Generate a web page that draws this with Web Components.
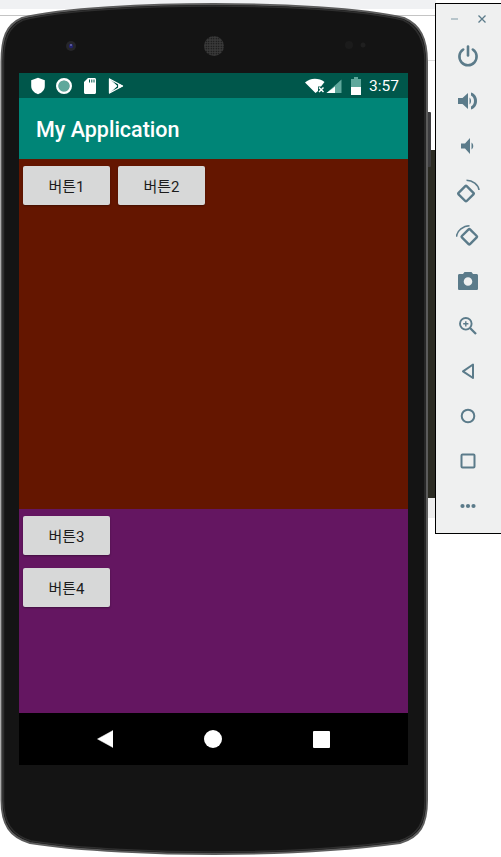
<!DOCTYPE html>
<html lang="ko">
<head>
<meta charset="utf-8">
<title>Emulator</title>
<style>
  html, body { margin: 0; padding: 0; background: #fff; overflow: hidden; }
  body { font-family: Roboto, "Noto Sans CJK KR", sans-serif; }
</style>
</head>
<body>

<emu-desktop>
  <android-phone>
    <status-bar time="3:57"></status-bar>
    <app-bar title="My Application"></app-bar>
    <color-panel color="#641600" grow="350" row>
      <android-button>버튼1</android-button>
      <android-button>버튼2</android-button>
    </color-panel>
    <color-panel color="#641661" grow="204">
      <android-button>버튼3</android-button>
      <android-button>버튼4</android-button>
    </color-panel>
    <nav-bar></nav-bar>
  </android-phone>
  <emu-toolbar></emu-toolbar>
</emu-desktop>

<script>
class EmuDesktop extends HTMLElement {
  constructor() {
    super();
    this.attachShadow({ mode: "open" });
  }

  connectedCallback() {
    this.shadowRoot.innerHTML = `
      <style>
        :host { display: block; position: relative; width: 501px; height: 857px; overflow: hidden; background: #fff; }
        .strip { position: absolute; left: 0; top: 0; width: 436px; height: 9px; background: #f0f1f3; }
        .rule { position: absolute; left: 0; top: 15px; width: 436px; height: 1px; background: #c4c4c4; }
        .rule2 { position: absolute; left: 420px; top: 60px; width: 16px; height: 1px; background: #dcdcdc; }
        .behind { position: absolute; left: 426px; top: 150px; width: 10px; height: 348px; background: #2b2b23; }
        .behind2 { position: absolute; left: 426px; top: 498px; width: 10px; height: 20px; background: #eeeeee; }
      </style>
      <div class="strip"></div>
      <div class="rule"></div>
      <div class="rule2"></div>
      <div class="behind"></div>
      <div class="behind2"></div>
      <slot></slot>
    `;
  }
}

class AndroidPhone extends HTMLElement {
  constructor() {
    super();
    this.attachShadow({ mode: "open" });
  }

  connectedCallback() {
    this.shadowRoot.innerHTML = `
      <style>
        :host { display: block; position: absolute; left: 0; top: 0; width: 432px; height: 857px; }
        svg { position: absolute; left: 0; top: 0; }
        .screen {
          position: absolute;
          left: 19px; top: 73px;
          width: 389px; height: 692px;
          display: flex;
          flex-direction: column;
        }
      </style>
      <svg width="432" height="857" viewBox="0 0 432 857">
        <defs>
          <pattern id="grille" width="2.500" height="2.500" patternUnits="userSpaceOnUse">
            <circle cx="1.250" cy="1.250" r=".7" fill="#0e0e0e"/>
          </pattern>
        </defs>
        <rect x="426" y="112" width="5" height="55" rx="1" fill="#3c3c3e"/>
        <path d="M1.500 62 C1.500 38 6 25 22 18 C62 8 150 4 214 4 C280 4 362 8 404 18 C420 25 427 38 427 62 L427 800 C427 825 420 837 400 843 C340 851 270 854 214 854 C160 854 80 851 30 843 C10 837 1.500 825 1.500 800 Z"
              fill="#141414" stroke="#5c5c5c" stroke-width="2"/>
        <path d="M3.500 62 C3.500 40 8 27 23 20 C62 10 150 6 214 6 C280 6 362 10 403 20 C418 27 425 40 425 62 L425 800 C425 823 418 835 399 841 C340 849 270 852 214 852 C160 852 80 849 31 841 C12 835 3.500 823 3.500 800 Z"
              fill="none" stroke="#2e2e2e" stroke-width="1.500"/>
        <circle cx="71" cy="46" r="5" fill="#26262a"/>
        <circle cx="71" cy="46" r="2.200" fill="#23236e"/>
        <circle cx="71" cy="45" r=".8" fill="#9a9ad0"/>
        <circle cx="214" cy="46" r="10" fill="#3a3a3a"/>
        <circle cx="214" cy="46" r="10" fill="url(#grille)"/>
        <circle cx="349" cy="45" r="4" fill="#1b1b1b"/>
        <circle cx="363" cy="45" r="2.500" fill="#1f1f1f"/>
      </svg>
      <div class="screen"><slot></slot></div>
    `;
  }
}

class StatusBar extends HTMLElement {
  constructor() {
    super();
    this.attachShadow({ mode: "open" });
  }

  connectedCallback() {
    this.shadowRoot.innerHTML = `
      <style>
        :host {
          display: flex;
          align-items: center;
          flex: none;
          height: 25px;
          background: #00574b;
          color: #fff;
          padding: 0 9px 0 11px;
        }
        svg { display: block; flex: none; }
        .left { display: flex; align-items: center; gap: 9px; }
        .right { display: flex; align-items: center; margin-left: auto; }
        .time { font: 400 15.500px Roboto, sans-serif; margin-left: 8px; }
      </style>
      <div class="left">
        <svg width="16" height="18" viewBox="0 0 16 18"><path d="M8 .8 L14.800 3.200 V9 C14.800 13 12 15.800 8 17.200 C4 15.800 1.200 13 1.200 9 V3.200 Z" fill="#fff"/></svg>
        <svg width="18" height="18" viewBox="0 0 18 18"><circle cx="9" cy="9" r="5.500" fill="#5fa89c"/><circle cx="9" cy="9" r="6.800" fill="none" stroke="#fff" stroke-width="2.400"/></svg>
        <svg width="14" height="18" viewBox="0 0 14 18" style="margin-left:1px"><path d="M5 1 H11.500 C12.400 1 13 1.600 13 2.500 V15.500 C13 16.400 12.400 17 11.500 17 H2.500 C1.600 17 1 16.400 1 15.500 V5 Z" fill="#fff"/><path d="M6.500 2.500v3M8.800 2.500v3M11 2.500v3" stroke="#00574b" stroke-width="1"/></svg>
        <svg width="16" height="18" viewBox="0 0 16 18" style="margin-left:2px"><path d="M1.500 2 L14.500 9 L1.500 16 Z" fill="none" stroke="#fff" stroke-width="1.300" stroke-linejoin="round"/><path d="M1.500 2 L9 9 L1.500 16 M10.500 7 L14.500 9 L10.500 11 Z" fill="#fff" stroke="#fff" stroke-width=".8"/></svg>
      </div>
      <div class="right">
        <svg width="20" height="16" viewBox="0 0 20 16"><path d="M0 4.500 C5 -.5 14 -.5 19.500 4 L16 8.500 H13 V13 L10.500 15 Z" fill="#fff"/><path d="M14 9.500 L18.500 14 M18.500 9.500 L14 14" stroke="#fff" stroke-width="1.500"/></svg>
        <svg width="16" height="14" viewBox="0 0 16 14" style="margin-left:1px"><path d="M15.500 .5 V14 H.5 Z" fill="#5fa89c"/><path d="M9 7.500 V14 H.5 Z" fill="#fff"/></svg>
        <svg width="10" height="18" viewBox="0 0 10 18" style="margin-left:9px"><path d="M3 0 H7 V2 H10 V18 H0 V2 H3 Z" fill="#5fa89c"/><rect y="10" width="10" height="8" fill="#fff"/></svg>
        <span class="time">${this.getAttribute("time")}</span>
      </div>
    `;
  }
}

class AppBar extends HTMLElement {
  constructor() {
    super();
    this.attachShadow({ mode: "open" });
  }

  connectedCallback() {
    this.shadowRoot.innerHTML = `
      <style>
        :host {
          display: flex;
          align-items: center;
          flex: none;
          box-sizing: border-box;
          height: 61px;
          padding: 2px 0 0 17px;
          background: #008577;
          color: #fff;
          font: 500 21.500px Roboto, sans-serif;
        }
      </style>
      <span>${this.getAttribute("title")}</span>
    `;
  }
}

class ColorPanel extends HTMLElement {
  constructor() {
    super();
    this.attachShadow({ mode: "open" });
  }

  connectedCallback() {
    const row = this.hasAttribute("row");
    this.shadowRoot.innerHTML = `
      <style>
        :host {
          display: flex;
          flex: none;
          flex-direction: ${row ? "row" : "column"};
          align-items: flex-start;
          gap: ${row ? "8px" : "13px"};
          height: ${this.getAttribute("grow")}px;
          box-sizing: border-box;
          padding: 7px 4px;
          background: ${this.getAttribute("color")};
        }
      </style>
      <slot></slot>
    `;
  }
}

class AndroidButton extends HTMLElement {
  constructor() {
    super();
    this.attachShadow({ mode: "open" });
  }

  connectedCallback() {
    this.shadowRoot.innerHTML = `
      <style>
        :host {
          display: flex;
          align-items: center;
          justify-content: center;
          width: 87px;
          height: 39px;
          border-radius: 2px;
          background: #d7d8d8;
          color: #1c1c1c;
          font: 400 15px Roboto, "Noto Sans CJK KR", sans-serif;
          box-shadow: 0 1px 2px rgba(0,0,0,.35);
        }
      </style>
      <slot></slot>
    `;
  }
}

class NavBar extends HTMLElement {
  constructor() {
    super();
    this.attachShadow({ mode: "open" });
  }

  connectedCallback() {
    this.shadowRoot.innerHTML = `
      <style>
        :host {
          display: flex;
          align-items: center;
          flex: none;
          height: 52px;
          background: #000;
          padding-left: 78px;
          gap: 91px;
        }
        svg { display: block; flex: none; }
      </style>
      <svg width="16" height="18" viewBox="0 0 16 18"><path d="M16 .5 V17.500 L.5 9 Z" fill="#fff" stroke="#fff" stroke-width=".5" stroke-linejoin="round"/></svg>
      <svg width="18" height="18" viewBox="0 0 18 18"><circle cx="9" cy="9" r="9" fill="#fff"/></svg>
      <svg width="17" height="17" viewBox="0 0 17 17"><rect width="17" height="17" rx="1" fill="#fff"/></svg>
    `;
  }
}

const TOOL_ICONS = {
  power: `<path d="M12 2.500v9" stroke-width="2.600" fill="none" stroke-linecap="round"/><path d="M7.200 5.500a8.600 8.600 0 1 0 9.600 0" fill="none" stroke-width="2.600" stroke-linecap="round"/>`,
  volumeUp: `<path d="M2 9v6h4.500l5.500 5V4L6.500 9z" stroke="none"/><path d="M15 3.500 c8 2 8 15 0 17 v-3 c4-2 4-9 0-11z" stroke="none"/><path d="M13.500 8.500c2 1.500 2 5.500 0 7z" stroke="none"/>`,
  volumeDown: `<path d="M5 9.500v5h4l5 5.500V4L9 9.500z" stroke="none"/><path d="M15.500 8.500c2.300 1.500 2.300 5.500 0 7z" stroke="none"/>`,
  rotateRight: `<rect x="4.300" y="8.800" width="11.500" height="11.500" rx="1" transform="rotate(45 10 14.500)" fill="none" stroke-width="2.400"/><path d="M10.500 1.200 C16.500 1.200 22.500 5.500 23 11" fill="none" stroke-width="1.600"/>`,
  rotateLeft: `<rect x="7.500" y="7" width="11.500" height="11.500" rx="1" transform="rotate(45 13.300 12.800)" fill="none" stroke-width="2.400"/><path d="M13.500 1.700 C7.500 1.700 1 6.500 .5 12.700" fill="none" stroke-width="1.600"/>`,
  camera: `<path d="M8.500 3 L7 5 H3.500 C2.500 5 2 5.600 2 6.500 V19.500 C2 20.500 2.600 21 3.500 21 H20.500 C21.400 21 22 20.500 22 19.500 V6.500 C22 5.600 21.400 5 20.500 5 H17 L15.500 3 Z M12 8.200 a4.300 4.300 0 1 1 0 8.600 a4.300 4.300 0 0 1 0-8.600z" fill-rule="evenodd" stroke="none"/>`,
  zoom: `<circle cx="9.800" cy="9.800" r="5.800" fill="none" stroke-width="1.900"/><path d="M14 14 L20 20" fill="none" stroke-width="2.300"/><path d="M9.800 7.200v5.200M7.200 9.800h5.200" fill="none" stroke-width="1.400"/>`,
  back: `<path d="M17 5.500 V19 L7 12.300 Z" fill="none" stroke-width="2" stroke-linejoin="round"/>`,
  home: `<circle cx="12" cy="12" r="6.300" fill="none" stroke-width="2"/>`,
  square: `<rect x="5.500" y="5.500" width="13" height="13" rx="1" fill="none" stroke-width="2"/>`,
  more: `<circle cx="6.500" cy="12" r="2.100" stroke="none"/><circle cx="12" cy="12" r="2.100" stroke="none"/><circle cx="17.500" cy="12" r="2.100" stroke="none"/>`
};

class ToolIcon extends HTMLElement {
  constructor() {
    super();
    this.attachShadow({ mode: "open" });
  }

  connectedCallback() {
    const name = this.getAttribute("name");
    this.shadowRoot.innerHTML = `
      <style>
        :host { display: flex; align-items: center; justify-content: center; flex: none; width: 63px; height: 45px; }
        svg { display: block; fill: #5b7b8a; stroke: #5b7b8a; }
      </style>
      <svg width="24" height="24" viewBox="0 0 24 24">${TOOL_ICONS[name]}</svg>
    `;
  }
}

class EmuToolbar extends HTMLElement {
  constructor() {
    super();
    this.attachShadow({ mode: "open" });
  }

  connectedCallback() {
    const names = ["power", "volumeUp", "volumeDown", "rotateRight", "rotateLeft", "camera", "zoom", "back", "home", "square", "more"];
    this.shadowRoot.innerHTML = `
      <style>
        :host {
          display: block;
          position: absolute;
          left: 435px; top: 3px;
          width: 80px; height: 531px;
          box-sizing: border-box;
          background: #eff0f0;
          border: 1.500px solid #000;
        }
        .top { display: flex; align-items: center; height: 29px; padding-left: 14px; gap: 17px; }
        svg { display: block; }
      </style>
      <div class="top">
        <svg width="10" height="10" viewBox="0 0 10 10"><path d="M1 5h7" stroke="#9fb2bb" stroke-width="1.400"/></svg>
        <svg width="10" height="10" viewBox="0 0 10 10"><path d="M1.500 1.500l7 7M8.500 1.500l-7 7" stroke="#5b7b8a" stroke-width="1.300"/></svg>
      </div>
      <div>${names.map(n => `<tool-icon name="${n}"></tool-icon>`).join("")}</div>
    `;
  }
}

customElements.define("emu-desktop", EmuDesktop);
customElements.define("android-phone", AndroidPhone);
customElements.define("status-bar", StatusBar);
customElements.define("app-bar", AppBar);
customElements.define("color-panel", ColorPanel);
customElements.define("android-button", AndroidButton);
customElements.define("nav-bar", NavBar);
customElements.define("tool-icon", ToolIcon);
customElements.define("emu-toolbar", EmuToolbar);
</script>
</body>
</html>
